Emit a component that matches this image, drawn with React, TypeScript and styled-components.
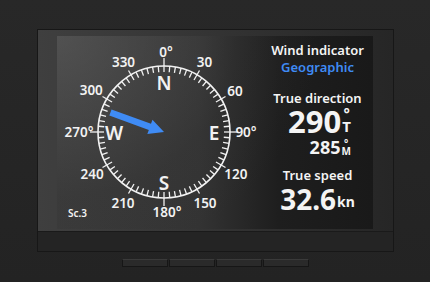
import React, { type JSX } from "react";
import styled, { createGlobalStyle } from "styled-components";

const FONT = `"Noto Sans", "DejaVu Sans Condensed", "Liberation Sans", sans-serif`;
const BLUE = "#3f8bf4";

const Global = createGlobalStyle`
  html, body {
    margin: 0;
    padding: 0;
    background: #252525;
    width: 430px;
    height: 282px;
    overflow: hidden;
  }
`;

const Page = styled.div`
  width: 430px;
  height: 282px;
  box-sizing: border-box;
  padding-top: 29px;
  display: flex;
  flex-direction: column;
  align-items: center;
  background: linear-gradient(180deg, #282828 0%, #232323 100%);
  font-family: ${FONT};
  font-stretch: condensed;
`;

const Bezel = styled.div`
  width: 357px;
  height: 223px;
  box-sizing: border-box;
  border: 1px solid #171717;
  display: flex;
  flex-direction: column;
  background: #222;
`;

const Glass = styled.div`
  height: 202px;
  box-sizing: border-box;
  padding: 6px 20px 2px 19px;
  background: linear-gradient(90deg, #3f3f3f 0%, #363636 40%, #262626 100%);
  border-bottom: 1px solid #1a1a1a;
`;

const Display = styled.div`
  width: 316px;
  height: 193px;
  display: grid;
  grid-template-columns: 209px 104px;
  background:
    radial-gradient(ellipse 260px 230px at 0% 0%, rgba(100, 100, 100, 0.55) 0%, rgba(60, 60, 60, 0.2) 70%, rgba(0, 0, 0, 0) 100%),
    linear-gradient(90deg, #3a3a3a 0%, #333 45%, #1e1e1e 70%, #191919 100%);
`;

const Chin = styled.div`
  flex: 1;
  background: #242424;
`;

const Buttons = styled.div`
  margin-top: 7px;
  display: flex;
  gap: 1px;
`;

const HwButton = styled.div`
  width: 46px;
  height: 8px;
  box-sizing: border-box;
  background: #2a2a2a;
  border: 1px solid #161616;
  border-top-color: #3a3a3a;
  border-radius: 1px;
`;

const Dial = styled.svg`
  display: block;
  font-family: ${FONT};
  font-stretch: condensed;
  fill: #f2f2f2;
`;

const Panel = styled.div`
  display: flex;
  flex-direction: column;
  align-items: center;
  color: #f4f4f4;
  padding-top: 6px;
`;

const Label = styled.div<{ $blue?: boolean; $gap?: number }>`
  font-size: 13px;
  line-height: 17px;
  font-weight: 600;
  color: ${(p) => (p.$blue ? BLUE : "#f4f4f4")};
  margin-top: ${(p) => p.$gap ?? 0}px;
  white-space: nowrap;
`;

const ValueBlock = styled.div`
  display: flex;
  flex-direction: column;
  align-items: flex-end;
  margin-left: 4px;
`;

const ValueRow = styled.div<{ $size: number; $gap?: number }>`
  display: flex;
  align-items: stretch;
  font-size: ${(p) => p.$size}px;
  line-height: ${(p) => Math.round(p.$size * 0.9)}px;
  font-weight: 700;
  margin-top: ${(p) => p.$gap ?? 0}px;
`;

const Unit = styled.span<{ $size: number }>`
  display: flex;
  flex-direction: column;
  justify-content: space-between;
  align-items: center;
  font-size: ${(p) => p.$size}px;
  line-height: ${(p) => Math.round(p.$size * 0.8)}px;
  margin-left: 1px;
  padding: 0 0 ${(p) => Math.round(p.$size * 0.2)}px;
`;

const Suffix = styled.span`
  font-size: 14px;
  align-self: flex-end;
  line-height: 14px;
  padding-bottom: 3px;
  margin-left: 1px;
`;

const CX = 107;
const CY = 96;
const R = 66;

const pt = (a: number, r: number) => {
  const t = (a * Math.PI) / 180;
  return { x: CX + r * Math.sin(t), y: CY - r * Math.cos(t) };
};

const LABELS: { a: number; text: string; r: number; dx: number }[] = [
  { a: 0, text: "0°", r: 80, dx: 2 },
  { a: 30, text: "30", r: 81, dx: 0 },
  { a: 60, text: "60", r: 82, dx: 0 },
  { a: 90, text: "90°", r: 82, dx: 0 },
  { a: 120, text: "120", r: 83, dx: 0 },
  { a: 150, text: "150", r: 82, dx: 0 },
  { a: 180, text: "180°", r: 80, dx: 3 },
  { a: 210, text: "210", r: 82, dx: 0 },
  { a: 240, text: "240", r: 83, dx: 0 },
  { a: 270, text: "270°", r: 85, dx: 0 },
  { a: 300, text: "300", r: 84, dx: 0 },
  { a: 330, text: "330", r: 81, dx: 0 },
];

const CARDINALS = [
  { a: 0, t: "N" },
  { a: 90, t: "E" },
  { a: 180, t: "S" },
  { a: 270, t: "W" },
];

function Compass({ heading }: { heading: number }): JSX.Element {
  const ticks = [];
  for (let a = 0; a < 360; a += 5) {
    const cardinal = a % 90 === 0;
    const major = a % 30 === 0;
    const r1 = R - 6;
    const r2 = cardinal ? R + 8 : major ? R + 5 : R;
    const p1 = pt(a, r1);
    const p2 = pt(a, r2);
    ticks.push(
      <line key={a} x1={p1.x} y1={p1.y} x2={p2.x} y2={p2.y} stroke="#f2f2f2" strokeWidth={1.3} />
    );
  }
  const tail = R - 9;
  return (
    <Dial width={209} height={193} viewBox="0 0 209 193">
      <circle cx={CX} cy={CY} r={R} fill="none" stroke="#f2f2f2" strokeWidth={1.6} />
      {ticks}
      {LABELS.map((l) => {
        const p = pt(l.a, l.r);
        return (
          <text
            key={l.a}
            x={p.x + l.dx}
            y={p.y}
            fontSize={13.5}
            fontWeight={600}
            textAnchor="middle"
            dominantBaseline="central"
          >
            {l.text}
          </text>
        );
      })}
      {CARDINALS.map((c) => {
        const p = pt(c.a, 50);
        return (
          <text
            key={c.t}
            x={p.x}
            y={p.y + 1}
            fontSize={19}
            fontWeight={600}
            textAnchor="middle"
            dominantBaseline="central"
          >
            {c.t}
          </text>
        );
      })}
      {/* wind arrow: tail on the bearing, tip at the centre */}
      <g transform={`translate(${CX} ${CY}) rotate(${heading})`}>
        <polygon
          points={`-3.2,${-tail} 3.2,${-tail} 3.2,-15 7.5,-15 0,0 -7.5,-15 -3.2,-15`}
          fill={BLUE}
        />
      </g>
      <text x={11} y={181} fontSize={10} fontWeight={600}>
        Sc.3
      </text>
    </Dial>
  );
}

export default function App(): JSX.Element {
  return (
    <>
      <Global />
      <Page>
        <Bezel>
          <Glass>
            <Display>
              <Compass heading={290} />
              <Panel>
                <Label>Wind indicator</Label>
                <Label $blue>Geographic</Label>
                <Label $gap={14}>True direction</Label>
                <ValueBlock>
                  <ValueRow $size={31}>
                    290
                    <Unit $size={15}>
                      <span>°</span>
                      <span>T</span>
                    </Unit>
                  </ValueRow>
                  <ValueRow $size={18} $gap={4}>
                    285
                    <Unit $size={10}>
                      <span>°</span>
                      <span>M</span>
                    </Unit>
                  </ValueRow>
                </ValueBlock>
                <Label $gap={10}>True speed</Label>
                <ValueRow $size={28} $gap={3}>
                  32.6
                  <Suffix>kn</Suffix>
                </ValueRow>
              </Panel>
            </Display>
          </Glass>
          <Chin />
        </Bezel>
        <Buttons>
          <HwButton />
          <HwButton />
          <HwButton />
          <HwButton />
        </Buttons>
      </Page>
    </>
  );
}
